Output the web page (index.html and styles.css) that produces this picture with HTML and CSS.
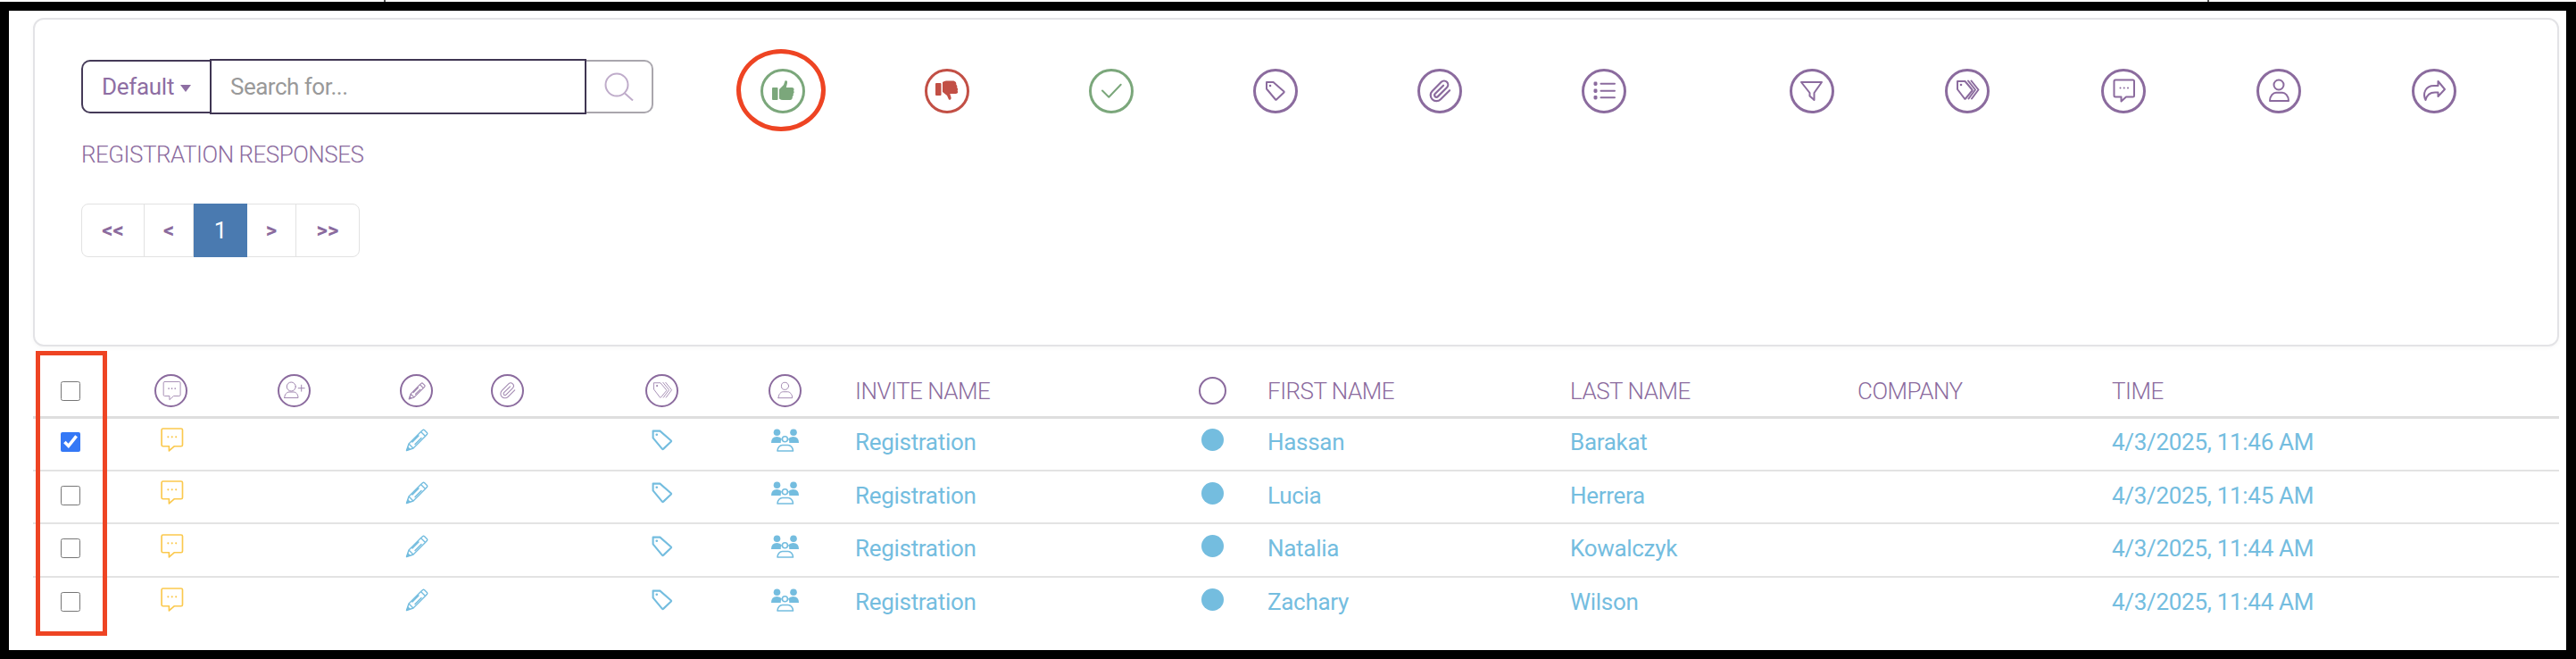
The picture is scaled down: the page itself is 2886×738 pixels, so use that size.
FILE: index.html
```html
<!DOCTYPE html>
<html lang="en">
  <head>
    <meta charset="UTF-8" />
    <title>Registration Responses</title>
    <link rel="stylesheet" href="styles.css">
  </head>
  <body>
    <svg class="icon-defs" aria-hidden="true">
      <symbol id="i-thumb-up" viewBox="0 0 50 50">
        <rect x="13" y="21" width="6.5" height="14" rx="1" fill="currentColor" stroke="none" />
        <path fill="currentColor" stroke="none" d="M21 23 L26 18 L27.5 13.5 Q30.5 12.5 30 16 L28.8 21 H35.5 Q38.5 21.5 37.2 24.5 Q38.5 26.5 36.7 28 Q37.5 30 35.8 31.2 Q36.2 34.5 33 35 H25 Q23 35 21 33.5 Z" />
      </symbol>
      <symbol id="i-thumb-down" viewBox="0 0 50 50">
        <rect x="12" y="16" width="6.5" height="14" rx="1" fill="currentColor" stroke="none" />
        <path fill="currentColor" stroke="none" d="M20 26 L25 30 L27 34.5 Q30 35.5 29.5 32 L28.3 28 H35 Q38 27.5 36.7 24.5 Q38 22.5 36.2 21 Q37 19 35.3 17.8 Q35.7 14.5 32.5 13.5 H24 Q22 13.5 20 15 Z" />
      </symbol>
      <symbol id="i-check" viewBox="0 0 50 50">
        <path d="M15 24.5 L22.3 31.7 L35.7 17.7" />
      </symbol>
      <symbol id="i-tag" viewBox="0 0 50 50">
        <path d="M15 15 H22.5 L34.5 25.5 Q35 26 34.5 26.5 L26 34.5 Q25.5 35 25 34.5 L15 22.5 Z" />
        <circle cx="19" cy="19" r="1.3" fill="currentColor" stroke="none" />
      </symbol>
      <symbol id="i-clip" viewBox="0 0 50 50">
        <path transform="translate(12.5 12) scale(1.1)" d="M21.44 11.05l-9.19 9.19a6 6 0 0 1-8.49-8.49l9.19-9.19a4 4 0 0 1 5.66 5.66l-9.2 9.19a2 2 0 0 1-2.83-2.83l8.49-8.48" />
      </symbol>
      <symbol id="i-list" viewBox="0 0 50 50">
        <rect x="13.5" y="14.5" width="4" height="4.5" rx="1.4" fill="currentColor" stroke="none" />
        <rect x="13.5" y="22.5" width="4" height="4.5" rx="1.4" fill="currentColor" stroke="none" />
        <rect x="13.5" y="30" width="4" height="4.5" rx="1.4" fill="currentColor" stroke="none" />
        <path d="M21.5 16.7 H37 M21.5 24.7 H37 M21.5 32.3 H37" />
      </symbol>
      <symbol id="i-filter" viewBox="0 0 50 50">
        <path d="M13 15 H36 L27.5 27 V35 L22.5 30.5 V27 Z" />
      </symbol>
      <symbol id="i-tags" viewBox="0 0 50 50">
        <path d="M14 14 H22.5 L30.5 23.5 Q31 24 30.5 24.5 L23 33.5 Q22.5 34 22 33.5 L14 23 Z" />
        <circle cx="18" cy="18" r="1.3" fill="currentColor" stroke="none" />
        <path d="M26 13.5 L34 23.5 L26.5 33.5 M29.5 13.5 L37.5 23.5 L30 33.5" />
      </symbol>
      <symbol id="i-chat" viewBox="0 0 50 50">
        <path d="M16 12.5 H35.5 Q37 12.5 37 14 V30 Q37 31.5 35.5 31.5 H28 L22.5 36.5 V31.5 H16 Q14.5 31.5 14.5 30 V14 Q14.5 12.5 16 12.5 Z" />
        <circle cx="21.5" cy="21.5" r="1" fill="currentColor" stroke="none" />
        <circle cx="25.7" cy="21.5" r="1" fill="currentColor" stroke="none" />
        <circle cx="30" cy="21.5" r="1" fill="currentColor" stroke="none" />
      </symbol>
      <symbol id="i-user" viewBox="0 0 50 50">
        <ellipse cx="25" cy="18" rx="5.5" ry="5.5" />
        <path d="M15 36 H36 C36 30 32 26.7 29 26.7 H22 C19 26.7 15 30 15 36 Z" />
      </symbol>
      <symbol id="i-share" viewBox="0 0 50 50">
        <path d="M29.5 14 L37 23 L29.5 31 V26.5 H26 C20 26.5 17 29 15.5 35 C12 28 15 19 25 19 H29.5 Z" />
      </symbol>
      <symbol id="i-user-add" viewBox="0 0 37 37">
        <circle cx="15.3" cy="14" r="5" stroke-width="1" />
        <path stroke-width="1" d="M7.7 26.5 H23 C23 22.5 20.5 20 18 20 H13 C10.5 20 7.7 22.5 7.7 26.5 Z M26.7 12.2 V19.2 M23.2 15.7 H30.2" />
      </symbol>
      <symbol id="i-pencil" viewBox="0 0 26 26">
        <path d="M1.5 24.5 L4 17 L17.5 3.5 L22.5 8.5 L9 22 Z M4 17 L9 22 M8 15 L15 8 M11 17.5 L18 10.5 M17.5 3.5 L19.5 1.7 Q20.5 .8 21.6 1.7 L24.3 4.4 Q25.2 5.5 24.3 6.6 L22.5 8.5" />
        <path fill="currentColor" stroke="none" d="M1 25 L2.8 19.8 L6.2 23.2 Z" />
      </symbol>
      <symbol id="i-people" viewBox="0 0 31 26">
        <circle cx="6.5" cy="4.2" r="3.8" fill="currentColor" stroke="none" />
        <circle cx="25" cy="4.2" r="3.8" fill="currentColor" stroke="none" />
        <path fill="currentColor" stroke="none" d="M0 16 Q0 9 6.5 9 Q10 9 12 11.5 Q10.5 13.5 10.8 16 Z M31 16 Q31 9 24.5 9 Q21 9 19 11.5 Q20.5 13.5 20.2 16 Z" />
        <circle cx="15.4" cy="11.8" r="3" stroke-width="1.6" />
        <path stroke-width="1.6" d="M7 25 H24.5 C24.5 21 21.5 18.5 19 18.5 H12.5 C10 18.5 7 21 7 25 Z" />
      </symbol>
    </svg>

    <i class="tick tick-one"></i>
    <i class="tick tick-two"></i>

    <div class="frame">
      <div class="card">
        <div class="toolbar">
          <div class="search-group">
            <button class="dropdown-btn">Default<span class="caret"></span></button>
            <input class="search-input" type="text" placeholder="Search for..." />
            <button class="search-btn">
              <svg class="search-icon" viewBox="0 0 33 32">
                <circle cx="14" cy="14" r="12.5" />
                <path d="M23 23.5 L32 31.5" />
              </svg>
            </button>
          </div>

          <div class="actions">
            <div class="action-set">
              <span class="round round-green">
                <svg class="ico"><use href="#i-thumb-up" /></svg>
                <span class="mark-ellipse"></span>
              </span>
              <span class="round round-red"><svg class="ico"><use href="#i-thumb-down" /></svg></span>
              <span class="round round-green"><svg class="ico"><use href="#i-check" /></svg></span>
              <span class="round"><svg class="ico"><use href="#i-tag" /></svg></span>
              <span class="round"><svg class="ico"><use href="#i-clip" /></svg></span>
              <span class="round"><svg class="ico"><use href="#i-list" /></svg></span>
            </div>
            <div class="action-set action-set-tight">
              <span class="round"><svg class="ico"><use href="#i-filter" /></svg></span>
              <span class="round"><svg class="ico"><use href="#i-tags" /></svg></span>
              <span class="round"><svg class="ico"><use href="#i-chat" /></svg></span>
              <span class="round"><svg class="ico"><use href="#i-user" /></svg></span>
              <span class="round"><svg class="ico"><use href="#i-share" /></svg></span>
            </div>
          </div>
        </div>

        <div class="list-title">REGISTRATION RESPONSES</div>

        <div class="pager">
          <a class="page page-wide">&lt;&lt;</a>
          <a class="page">&lt;</a>
          <a class="page page-active">1</a>
          <a class="page">&gt;</a>
          <a class="page page-wide">&gt;&gt;</a>
        </div>
      </div>

      <div class="table-wrap">
        <table class="responses">
          <colgroup>
            <col class="c-check" /><col class="c-chat" /><col class="c-add" /><col class="c-edit" />
            <col class="c-clip" /><col class="c-tag" /><col class="c-people" /><col class="c-invite" />
            <col class="c-dot" /><col class="c-first" /><col class="c-last" /><col class="c-company" />
            <col class="c-time" />
          </colgroup>
          <thead>
            <tr>
              <th><input class="check" type="checkbox" /></th>
              <th><span class="round round-sm"><svg class="ico ico-big"><use href="#i-chat" /></svg></span></th>
              <th><span class="round round-sm"><svg class="ico"><use href="#i-user-add" /></svg></span></th>
              <th><span class="round round-sm"><svg class="ico ico-pencil-sm"><use href="#i-pencil" /></svg></span></th>
              <th><span class="round round-sm"><svg class="ico"><use href="#i-clip" /></svg></span></th>
              <th><span class="round round-sm"><svg class="ico ico-big"><use href="#i-tags" /></svg></span></th>
              <th><span class="round round-sm"><svg class="ico"><use href="#i-user" /></svg></span></th>
              <th>INVITE NAME</th>
              <th><span class="cell-icon"><span class="dot dot-empty"></span></span></th>
              <th>FIRST NAME</th>
              <th>LAST NAME</th>
              <th>COMPANY</th>
              <th>TIME</th>
            </tr>
          </thead>
          <tbody>
            <tr>
              <td><input class="check" type="checkbox" checked /></td>
              <td><span class="cell-icon yellow"><svg class="ico ico-row ico-chat"><use href="#i-chat" /></svg></span></td>
              <td></td>
              <td><span class="cell-icon"><svg class="ico ico-pencil"><use href="#i-pencil" /></svg></span></td>
              <td></td>
              <td><span class="cell-icon"><svg class="ico ico-row"><use href="#i-tag" /></svg></span></td>
              <td><span class="cell-icon"><svg class="ico ico-people"><use href="#i-people" /></svg></span></td>
              <td>Registration</td>
              <td><span class="cell-icon"><span class="dot"></span></span></td>
              <td>Hassan</td>
              <td>Barakat</td>
              <td></td>
              <td>4/3/2025, 11:46 AM</td>
            </tr>
            <tr>
              <td><input class="check" type="checkbox" /></td>
              <td><span class="cell-icon yellow"><svg class="ico ico-row ico-chat"><use href="#i-chat" /></svg></span></td>
              <td></td>
              <td><span class="cell-icon"><svg class="ico ico-pencil"><use href="#i-pencil" /></svg></span></td>
              <td></td>
              <td><span class="cell-icon"><svg class="ico ico-row"><use href="#i-tag" /></svg></span></td>
              <td><span class="cell-icon"><svg class="ico ico-people"><use href="#i-people" /></svg></span></td>
              <td>Registration</td>
              <td><span class="cell-icon"><span class="dot"></span></span></td>
              <td>Lucia</td>
              <td>Herrera</td>
              <td></td>
              <td>4/3/2025, 11:45 AM</td>
            </tr>
            <tr>
              <td><input class="check" type="checkbox" /></td>
              <td><span class="cell-icon yellow"><svg class="ico ico-row ico-chat"><use href="#i-chat" /></svg></span></td>
              <td></td>
              <td><span class="cell-icon"><svg class="ico ico-pencil"><use href="#i-pencil" /></svg></span></td>
              <td></td>
              <td><span class="cell-icon"><svg class="ico ico-row"><use href="#i-tag" /></svg></span></td>
              <td><span class="cell-icon"><svg class="ico ico-people"><use href="#i-people" /></svg></span></td>
              <td>Registration</td>
              <td><span class="cell-icon"><span class="dot"></span></span></td>
              <td>Natalia</td>
              <td>Kowalczyk</td>
              <td></td>
              <td>4/3/2025, 11:44 AM</td>
            </tr>
            <tr>
              <td><input class="check" type="checkbox" /></td>
              <td><span class="cell-icon yellow"><svg class="ico ico-row ico-chat"><use href="#i-chat" /></svg></span></td>
              <td></td>
              <td><span class="cell-icon"><svg class="ico ico-pencil"><use href="#i-pencil" /></svg></span></td>
              <td></td>
              <td><span class="cell-icon"><svg class="ico ico-row"><use href="#i-tag" /></svg></span></td>
              <td><span class="cell-icon"><svg class="ico ico-people"><use href="#i-people" /></svg></span></td>
              <td>Registration</td>
              <td><span class="cell-icon"><span class="dot"></span></span></td>
              <td>Zachary</td>
              <td>Wilson</td>
              <td></td>
              <td>4/3/2025, 11:44 AM</td>
            </tr>
          </tbody>
        </table>
        <span class="mark-rect"></span>
      </div>
    </div>
  </body>
</html>
```

FILE: styles.css
```css
html,
body {
  margin: 0;
  padding: 0;
  background-color: #fff;
}

body {
  font-family: Roboto, "Liberation Sans", sans-serif;
  position: relative;
  color: #8b6b9e;
}

.icon-defs {
  display: none;
}

/* the two specks above the black edge */
.tick {
  position: absolute;
  top: 0;
  width: 2px;
  height: 2px;
  background-color: #555;
}

.tick-one {
  left: 430px;
}

.tick-two {
  left: 2473px;
}

.frame {
  box-sizing: border-box;
  height: 736px;
  margin-top: 2px;
  border-style: solid;
  border-color: #000;
  border-width: 10px 11px 10px 10px;
  padding: 8px 8px 0 27px;
  background-color: #fff;
  overflow: hidden;
}

.card {
  box-sizing: border-box;
  height: 368px;
  padding: 44px 52px 0;
  border: 2px solid #e3e3e6;
  border-radius: 12px;
  background-color: #fff;
  box-shadow: 0 2px 4px rgba(0, 0, 0, 0.03);
}

.toolbar {
  display: flex;
  align-items: flex-start;
}

.search-group {
  display: flex;
  align-items: center;
  flex: none;
}

.dropdown-btn {
  box-sizing: border-box;
  width: 144px;
  height: 60px;
  padding: 0 0 0 21px;
  border: 2px solid #453a58;
  border-right: none;
  border-radius: 10px 0 0 10px;
  background-color: #fff;
  color: #8e6ea3;
  font-family: inherit;
  font-size: 26px;
  letter-spacing: -0.3px;
  text-align: left;
}

.caret {
  display: inline-block;
  margin-left: 7px;
  border-top: 8px solid #8e6ea3;
  border-left: 6px solid transparent;
  border-right: 6px solid transparent;
  vertical-align: 3px;
}

.search-input {
  box-sizing: border-box;
  width: 422px;
  height: 62px;
  padding: 0 21px;
  border: 2px solid #3f3552;
  border-radius: 0;
  outline: none;
  font-family: inherit;
  font-size: 26px;
  letter-spacing: -0.5px;
}

.search-input::placeholder {
  color: #999;
  opacity: 1;
}

.search-btn {
  box-sizing: border-box;
  display: flex;
  align-items: center;
  justify-content: center;
  width: 75px;
  height: 60px;
  padding: 0;
  border: 2px solid #a9a6ad;
  border-left: none;
  border-radius: 0 10px 10px 0;
  background-color: #fff;
}

.search-icon {
  width: 33px;
  height: 32px;
  fill: none;
  stroke: #bfacca;
  stroke-width: 2;
}

.actions {
  display: flex;
  gap: 183px;
  margin: 11px 0 0 120px;
}

.action-set {
  display: flex;
  gap: 134px;
}

.action-set-tight {
  gap: 124.25px;
}

.round {
  box-sizing: border-box;
  position: relative;
  display: flex;
  flex: none;
  align-items: center;
  justify-content: center;
  width: 50px;
  height: 50px;
  border: 3px solid #8b6b9e;
  border-radius: 50%;
  color: #8b6b9e;
}

.round-green {
  border-color: #7ba77b;
  color: #7ba77b;
}

.round-red {
  border-color: #c24f45;
  color: #c24f45;
}

.round-sm {
  width: 37px;
  height: 37px;
  border-width: 2.5px;
}

.ico {
  flex: none;
  width: 50px;
  height: 50px;
  fill: none;
  stroke: currentColor;
  stroke-width: 2;
  stroke-linecap: round;
  stroke-linejoin: round;
  overflow: visible;
}

.round-sm .ico {
  width: 37px;
  height: 37px;
  stroke-width: 1.3;
  opacity: 0.8;
}

.round-sm .ico-big {
  width: 42px;
  height: 42px;
  stroke-width: 1.1;
}

.round-sm .ico-pencil-sm {
  width: 20px;
  height: 20px;
  stroke-width: 1.5;
}

/* annotations drawn over the page */
.mark-ellipse {
  box-sizing: border-box;
  position: absolute;
  left: -30px;
  top: -25px;
  width: 100px;
  height: 92px;
  border: 5px solid #ee4423;
  border-radius: 50%;
}

.mark-rect {
  box-sizing: border-box;
  position: absolute;
  left: 3px;
  top: 5px;
  width: 80px;
  height: 319px;
  border: 5px solid #ee4423;
}

.list-title {
  margin-top: 30px;
  font-size: 26px;
  font-weight: 300;
  letter-spacing: -0.5px;
  line-height: 30px;
}

.pager {
  display: inline-flex;
  margin-top: 40px;
  height: 60px;
  border: 1px solid #e2e2e2;
  border-radius: 8px;
  box-sizing: border-box;
}

.page {
  display: flex;
  align-items: center;
  justify-content: center;
  box-sizing: border-box;
  width: 55px;
  border-right: 1px solid #e2e2e2;
  font-size: 24px;
  font-weight: 700;
}

.page-wide {
  width: 70px;
}

.page:last-child {
  border-right: none;
}

.page-active {
  width: 60px;
  margin: -1px 0;
  border-right: none;
  background-color: #4a7ab0;
  color: #fff;
  font-size: 26px;
  font-weight: 400;
}

.table-wrap {
  position: relative;
}

.responses {
  width: 2830px;
  border-collapse: collapse;
  table-layout: fixed;
}

.c-check { width: 136px; }
.c-chat { width: 138px; }
.c-add { width: 137px; }
.c-edit { width: 102px; }
.c-clip { width: 173px; }
.c-tag { width: 138px; }
.c-people { width: 97px; }
.c-invite { width: 382px; }
.c-dot { width: 80px; }
.c-first { width: 339px; }
.c-last { width: 322px; }
.c-company { width: 285px; }
.c-time { width: 501px; }

.responses th,
.responses td {
  padding: 0;
  text-align: left;
  font-size: 26px;
  box-sizing: border-box;
}

.responses th {
  height: 79px;
  padding-top: 22px;
  border-bottom: 3px solid #dedede;
  font-weight: 300;
  letter-spacing: -0.5px;
  vertical-align: middle;
}

.responses td {
  height: 59.7px;
  padding-bottom: 4px;
  border-bottom: 2px solid #e3e3e3;
  color: #74bddf;
  font-weight: 400;
  letter-spacing: -0.3px;
  vertical-align: middle;
}

.responses tr:last-child td {
  border-bottom: none;
}

.responses td > .cell-icon {
  margin-top: -5px;
}

.check {
  display: block;
  width: 22px;
  height: 22px;
  margin: 0 0 0 31px;
  accent-color: #3478f6;
}

.cell-icon {
  display: flex;
  align-items: center;
  justify-content: center;
  width: 37px;
  height: 37px;
}

.yellow {
  color: #fbc94e;
}

.ico-row {
  width: 52px;
  height: 52px;
}

.ico-chat {
  stroke-width: 1.6;
}

.ico-pencil {
  width: 26px;
  height: 26px;
  stroke-width: 1.4;
}

.ico-people {
  width: 31px;
  height: 26px;
}

.dot {
  flex: none;
  box-sizing: border-box;
  width: 25px;
  height: 25px;
  border-radius: 50%;
  background-color: #74bddf;
}

.dot-empty {
  width: 31px;
  height: 31px;
  border: 2px solid #8b6b9e;
  background-color: transparent;
}
```
